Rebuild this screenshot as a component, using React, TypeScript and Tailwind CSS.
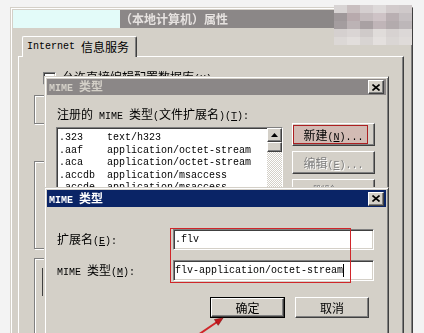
const CJK_RE = /([\u3000-\u303f\u4e00-\u9fff\uff00-\uffef]+)/;

// SimSun-like mix: CJK at 12px, latin at 6px per char
function Mix({ s }: { s: string }) {
  return (
    <>
      {s.split(CJK_RE).map((p, i) =>
        !p ? null : i % 2 === 1 ? (
          <span key={i} className="text-[12px] font-['Noto_Sans_CJK_SC',sans-serif]">
            {p}
          </span>
        ) : (
          <span key={i} className="text-[10px] font-['Liberation_Mono',monospace] whitespace-pre">
            {p}
          </span>
        )
      )}
    </>
  );
}

// "&X" marks the underlined access key
function Label({ s, className = "" }: { s: string; className?: string }) {
  const i = s.indexOf("&");
  if (i < 0)
    return (
      <span className={className}>
        <Mix s={s} />
      </span>
    );
  return (
    <span className={className}>
      <Mix s={s.slice(0, i)} />
      <span className="underline underline-offset-1">
        <Mix s={s[i + 1]} />
      </span>
      <Mix s={s.slice(i + 2)} />
    </span>
  );
}

const frame =
  "border border-t-[#d4d0c8] border-l-[#d4d0c8] border-r-[#404040] border-b-[#404040] shadow-[inset_1px_1px_0_#fff,inset_-1px_-1px_0_#808080]";
const raised =
  "border border-t-white border-l-white border-r-[#404040] border-b-[#404040] shadow-[inset_-1px_-1px_0_#808080]";
const sunken =
  "border border-t-[#808080] border-l-[#808080] border-r-white border-b-white shadow-[inset_1px_1px_0_#404040,inset_-1px_-1px_0_#d4d0c8]";
const etched = "border border-[#808080] shadow-[1px_1px_0_#fff,inset_1px_1px_0_#fff]";

const mimeList = [
  [".323", "text/h323"],
  [".aaf", "application/octet-stream"],
  [".aca", "application/octet-stream"],
  [".accdb", "application/msaccess"],
  [".accde", "application/msaccess"],
  [".acx", "application/internet-property-stream"],
];

const mosaic = [
  ["#d8d4d4", "#c9bfc0", "#d5cfd0", "#ddd9d9", "#d2cbcc", "#cfc9ca"],
  ["#9f989a", "#b8aaad", "#c4bbbd", "#cec3c6", "#b9afb2", "#c5bfc1"],
  ["#a49d9f", "#bcb3b5", "#a9a1a3", "#c0b5b8", "#b3abad", "#bdb7b9"],
  ["#d5d0cf", "#dad5d4", "#cfcac9", "#e0dcda", "#d7d2d1", "#dcd8d7"],
  ["#dcd8d6", "#e2dedc", "#d8d4d2", "#e4e0de", "#dad6d4", "#dfdbd9"],
];

function CloseBtn() {
  return (
    <div className={`w-[16px] h-[14px] bg-[#d4d0c8] flex items-center justify-center ${raised}`}>
      <svg width="8" height="7" viewBox="0 0 8 7">
        <path d="M0.5 0.5 L7.5 6.5 M7.5 0.5 L0.5 6.5" stroke="#000" strokeWidth="1.6" />
      </svg>
    </div>
  );
}

function Button({
  s,
  disabled,
  wide,
  isDefault,
}: {
  s: string;
  disabled?: boolean;
  wide?: boolean;
  isDefault?: boolean;
}) {
  const face = (
    <div
      className={`h-full flex items-center justify-center bg-[#d4d0c8] leading-[12px] ${raised} ${
        disabled ? "text-[#808080] [text-shadow:1px_1px_0_#fff]" : "text-black"
      }`}
    >
      <Label s={s} className="block h-[13px]" />
    </div>
  );
  if (isDefault)
    return <div className="w-[75px] h-[21px] border border-black">{face}</div>;
  return <div className={wide ? "w-[83px] h-[23px]" : "w-[74px] h-[21px]"}>{face}</div>;
}

function PropsWindow() {
  return (
    <div className={`w-[403px] h-[340px] bg-[#d4d0c8] p-[2px] ${frame}`}>
      <div className="flex h-[18px] bg-[#8b8787]">
        <div className="w-[107px] bg-[#e3fbf9]" />
        <span className="font-bold text-[12px] leading-[18px] text-[#e6e2e0] font-['Noto_Sans_CJK_SC',sans-serif]">
          （本地计算机）属性
        </span>
      </div>
      <div className="mt-[8px] pl-[9px] flex">
        <div className="relative z-10 h-[21px] w-[115px] pl-[4px] flex items-center bg-[#d4d0c8] leading-[12px] rounded-t-[2px] border-l border-t border-r border-l-white border-t-white border-r-[#404040] shadow-[inset_-1px_0_0_#808080]">
          <Mix s="Internet 信息服务" />
        </div>
      </div>
      <div className={`-mt-[1px] ml-[5px] w-[386px] h-[300px] ${raised}`}>
        <div className="pl-[24px] pt-[13px] flex items-center gap-[6px] leading-[12px]">
          <div className={`w-[13px] h-[13px] bg-white ${sunken}`} />
          <Label s="允许直接编辑配置数据库(&X)" />
        </div>
        <div className="pl-[15px]">
          <div className={`mt-[9px] w-[160px] h-[29px] ${etched}`} />
          <div className={`mt-[37px] w-[160px] h-[88px] ${etched}`} />
          <div className={`mt-[9px] w-[160px] h-[80px] pl-[7px] pt-[9px] ${etched}`}>
            <div className="w-[3px] h-[28px] border-l border-[#404040]" />
          </div>
        </div>
      </div>
    </div>
  );
}

function MimeListDialog() {
  return (
    <div className={`absolute left-[44px] top-[76px] w-[345px] h-[140px] bg-[#d4d0c8] p-[2px] ${frame}`}>
      <div className="h-[16px] bg-[#8b8787] flex items-center justify-between pl-[2px] pr-[2px]">
        <span className="font-bold leading-[12px] text-[#d4d0c8]">
          <Mix s="MIME 类型" />
        </span>
        <CloseBtn />
      </div>
      <div className="pl-[10px] pt-[12px]">
        <Label s="注册的 MIME 类型(文件扩展名)(&T):" className="block h-[12px] leading-[12px]" />
        <div className="flex mt-[4px]">
          <div className={`mt-[4px] -ml-[1px] w-[227px] h-[80px] bg-white flex ${sunken}`}>
            <div className="flex-1 pl-[2px] leading-[12.5px] overflow-hidden">
              {mimeList.map(([ext, type]) => (
                <div key={ext} className="flex h-[12.5px]">
                  <span className="w-[48px] shrink-0">
                    <Mix s={ext} />
                  </span>
                  <span className="whitespace-nowrap">
                    <Mix s={type} />
                  </span>
                </div>
              ))}
            </div>
            <div className="w-[15px] flex flex-col">
              <div className={`h-[14px] bg-[#d4d0c8] flex items-center justify-center ${raised}`}>
                <svg width="7" height="4" viewBox="0 0 7 4">
                  <path d="M3.5 0 L7 4 L0 4Z" fill="#000" />
                </svg>
              </div>
              <div className={`h-[10px] bg-[#d4d0c8] ${raised}`} />
              <div className="flex-1 bg-[image:repeating-conic-gradient(#fff_0_25%,#d4d0c8_0_50%)] bg-[length:2px_2px]" />
            </div>
          </div>
          <div className="ml-[9px] flex flex-col gap-[5px]">
            <Button s="新建(&N)..." wide />
            <Button s="编辑(&E)..." wide disabled />
            <Button s="删除(&R)" wide disabled />
          </div>
        </div>
      </div>
    </div>
  );
}

function MimeEditDialog() {
  return (
    <div className={`absolute left-[44px] top-[187px] w-[345px] h-[160px] bg-[#d4d0c8] p-[2px] ${frame}`}>
      <div className="h-[17px] bg-[#0a2466] flex items-center justify-between pl-[2px] pr-[2px]">
        <span className="font-bold leading-[12px] text-white">
          <Mix s="MIME 类型" />
        </span>
        <CloseBtn />
      </div>
      <div className="grid grid-cols-[116px_201px] gap-y-[10px] items-center pl-[10px] pt-[22px] leading-[12px]">
        <Label s="扩展名(&E):" />
        <div className={`h-[21px] bg-white flex items-center pl-[1px] ${sunken}`}>
          <Mix s=".flv" />
        </div>
        <Label s="MIME 类型(&M):" />
        <div className={`h-[21px] bg-white flex items-center pl-[1px] ${sunken}`}>
          <Mix s="flv-application/octet-stream" />
          <div className="w-[1px] h-[13px] bg-black" />
        </div>
      </div>
      <div className="flex justify-end gap-[10px] pr-[17px] mt-[16px]">
        <Button s="确定" isDefault />
        <Button s="取消" />
      </div>
    </div>
  );
}

export default function App() {
  return (
    <div className="relative w-[424px] h-[333px] overflow-hidden bg-[#f3f3f3] pl-[10px] pt-[7px] text-black">
      <PropsWindow />
      <MimeListDialog />
      <MimeEditDialog />

      {/* blurred-out corner of the screenshot */}
      <div className="absolute left-[334px] top-[5px] grid grid-cols-[repeat(6,13px)] grid-rows-[repeat(5,8px)]">
        {mosaic.flat().map((c, i) => (
          <div key={i} style={{ background: c }} />
        ))}
      </div>

      {/* red annotations */}
      <div className="absolute left-[293px] top-[125px] w-[75px] h-[19px] border border-[#d0262a] bg-[#fde6e6] mix-blend-multiply" />
      <div className="absolute left-[170px] top-[228px] w-[181px] h-[55px] border border-[#d0262a]" />
      <svg className="absolute left-[190px] top-[312px]" width="40" height="24" viewBox="0 0 40 24">
        <path d="M5 25 L27 10" stroke="#d0262a" strokeWidth="2" />
        <polygon points="33,6 28.2,13.3 24.4,7.5" fill="#c4161c" stroke="#7a0b0e" strokeWidth="0.6" />
      </svg>
    </div>
  );
}
